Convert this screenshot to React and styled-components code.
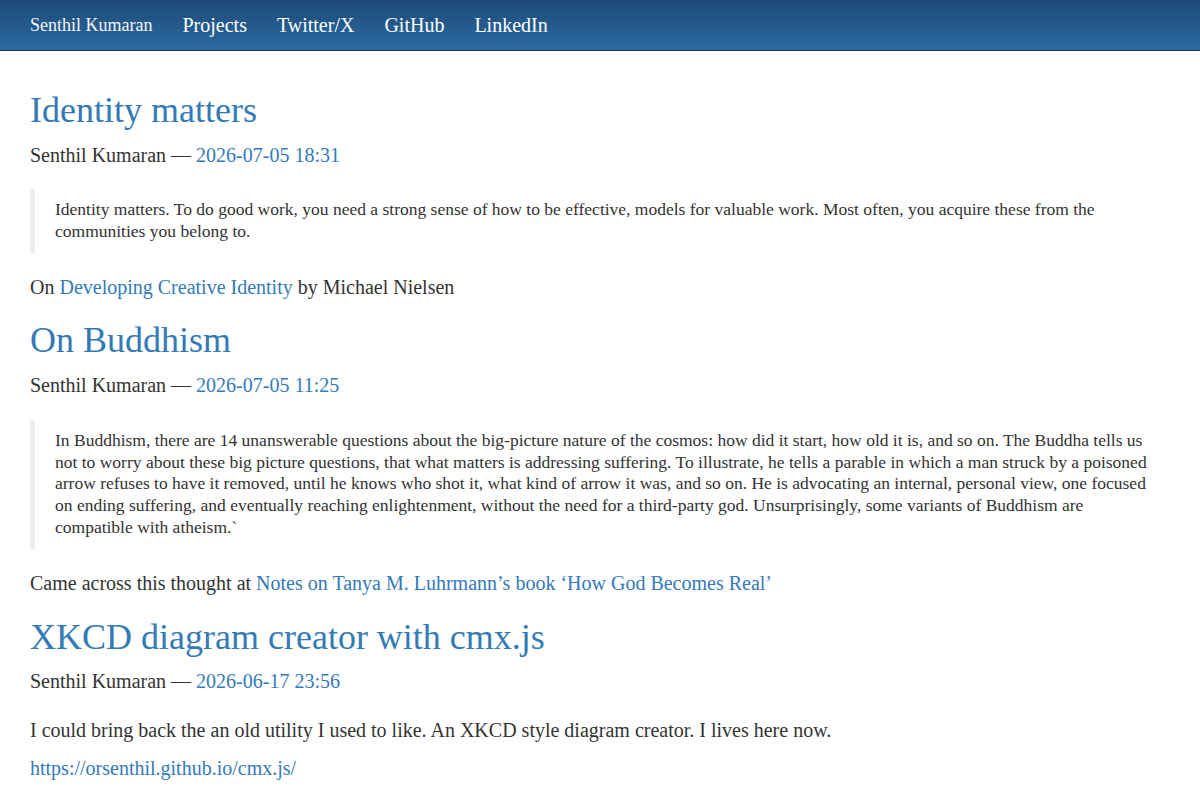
import React from 'react';
import styled, { createGlobalStyle } from 'styled-components';

const GlobalStyle = createGlobalStyle`
    body {
        margin: 0;
        font-family: "Liberation Serif", "Times New Roman", serif;
        font-size: 20px;
        line-height: 1.42857;
        color: #333;
        background: #fff;
    }

    a {
        color: #337ab7;
        text-decoration: none;
    }
`;

const NavBar = styled.nav`
    height: 50px;
    background: linear-gradient(to bottom, #1d4a76 0%, #2b6aa1 100%);
    border-bottom: 1px solid #17395a;
`;

const NavInner = styled.div`
    display: flex;
    align-items: center;
    padding: 0 15px;
    height: 50px;
`;

const Brand = styled.a`
    padding: 15px;
    font-size: 18px;
    line-height: 20px;
    color: #f4f4f4;
`;

const NavLinks = styled.ul`
    display: flex;
    margin: 0;
    padding: 0;
    list-style: none;
`;

const NavLink = styled.a`
    display: block;
    padding: 15px;
    font-size: 20px;
    line-height: 20px;
    color: #fff;
`;

const Main = styled.main`
    padding: 20px 30px 0;
`;

const Post = styled.article``;

const Title = styled.h1`
    margin: 20px 0 10px;
    font-size: 36px;
    font-weight: 400;
    line-height: 1.1;
`;

const Meta = styled.p`
    margin: 0 0 20px;
`;

const Quote = styled.blockquote`
    margin: 0 0 20px;
    padding: 10px 20px;
    border-left: 5px solid #eee;
    font-size: 17.5px;
    line-height: 1.25;
`;

const Para = styled.p`
    margin: 0 0 10px;
`;

const posts = [
    {
        title: 'Identity matters',
        date: '2026-07-05 18:31',
        quote:
            'Identity matters. To do good work, you need a strong sense of how to be effective, models for valuable work. Most often, you acquire these from the communities you belong to.',
        body: (
            <Para>
                On <a href="#">Developing Creative Identity</a> by Michael Nielsen
            </Para>
        ),
    },
    {
        title: 'On Buddhism',
        date: '2026-07-05 11:25',
        quote:
            'In Buddhism, there are 14 unanswerable questions about the big-picture nature of the cosmos: how did it start, how old it is, and so on. The Buddha tells us not to worry about these big picture questions, that what matters is addressing suffering. To illustrate, he tells a parable in which a man struck by a poisoned arrow refuses to have it removed, until he knows who shot it, what kind of arrow it was, and so on. He is advocating an internal, personal view, one focused on ending suffering, and eventually reaching enlightenment, without the need for a third-party god. Unsurprisingly, some variants of Buddhism are compatible with atheism.`',
        body: (
            <Para>
                Came across this thought at{' '}
                <a href="#">Notes on Tanya M. Luhrmann’s book ‘How God Becomes Real’</a>
            </Para>
        ),
    },
    {
        title: 'XKCD diagram creator with cmx.js',
        date: '2026-06-17 23:56',
        body: (
            <>
                <Para>
                    I could bring back the an old utility I used to like. An XKCD style diagram
                    creator. I lives here now.
                </Para>
                <Para>
                    <a href="#">https://orsenthil.github.io/cmx.js/</a>
                </Para>
            </>
        ),
    },
];

function App() {
    return (
        <>
            <GlobalStyle />
            <NavBar>
                <NavInner>
                    <Brand href="#">Senthil Kumaran</Brand>
                    <NavLinks>
                        {['Projects', 'Twitter/X', 'GitHub', 'LinkedIn'].map((label) => (
                            <li key={label}>
                                <NavLink href="#">{label}</NavLink>
                            </li>
                        ))}
                    </NavLinks>
                </NavInner>
            </NavBar>
            <Main>
                {posts.map((post) => (
                    <Post key={post.title}>
                        <Title>
                            <a href="#">{post.title}</a>
                        </Title>
                        <Meta>
                            Senthil Kumaran — <a href="#">{post.date}</a>
                        </Meta>
                        {post.quote && <Quote>{post.quote}</Quote>}
                        {post.body}
                    </Post>
                ))}
            </Main>
        </>
    );
}

export default App;
